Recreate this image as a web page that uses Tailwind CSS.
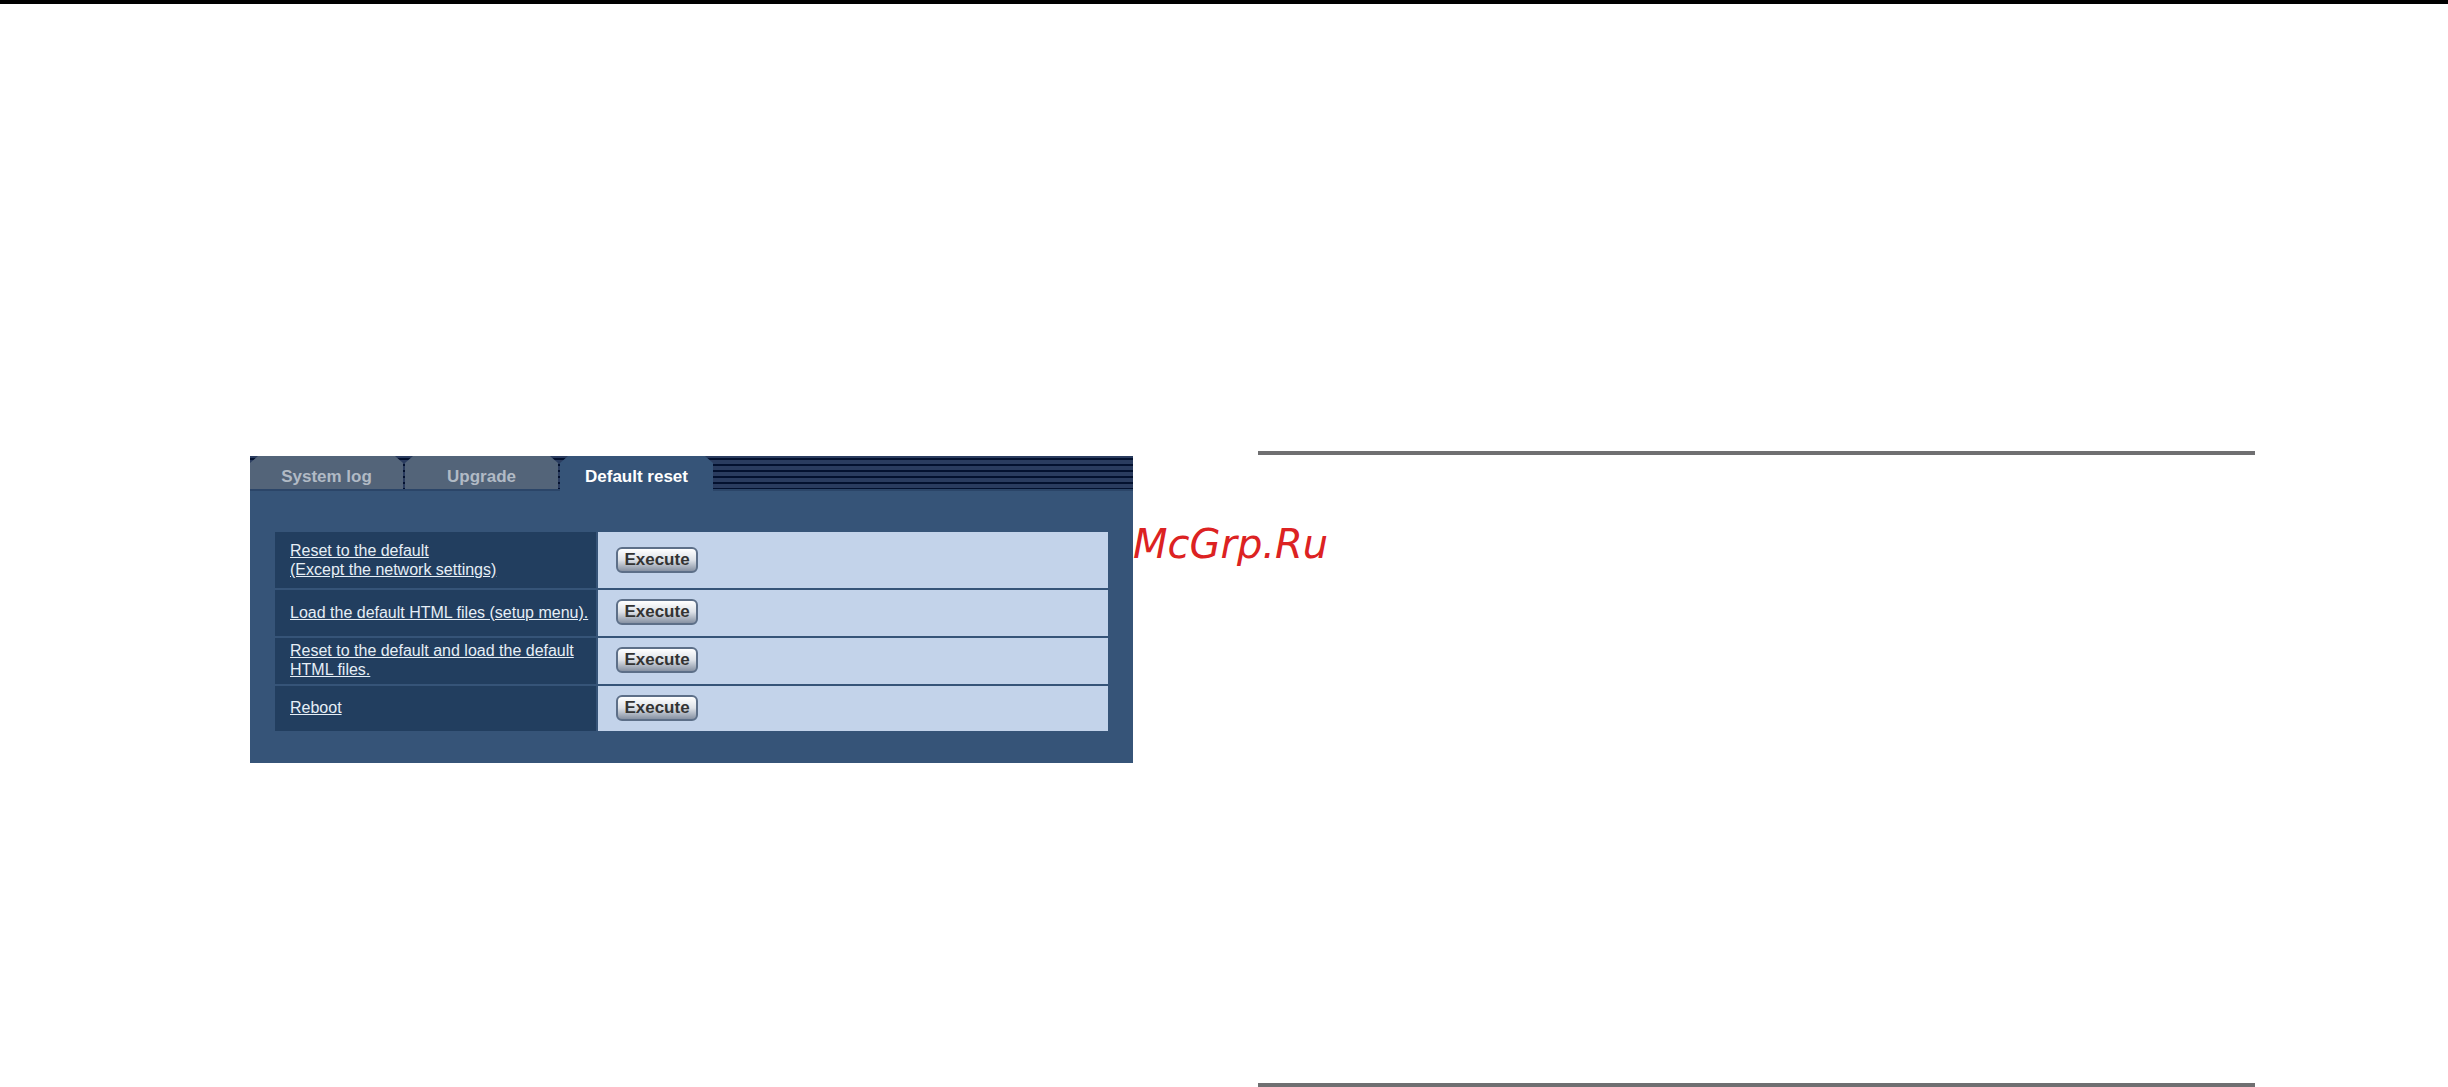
<!DOCTYPE html>
<html lang="en">
<head>
    <meta charset="UTF-8">
    <meta name="viewport" content="width=device-width, initial-scale=1.0">
    <title>Default reset</title>
    <script src="https://cdn.jsdelivr.net/npm/@tailwindcss/browser@4"></script>
</head>
<body class="bg-white font-['Liberation_Sans',Arial,sans-serif]">

    <main class="min-h-screen flex gap-[125px] border-t-4 border-black pt-[447px] pl-[250px] pr-[193px]">

        <!-- Maintenance panel -->
        <section class="relative flex-[883] self-start mt-[5px] bg-[#365478] pb-8">

            <!-- Tabs over the striped bar -->
            <nav class="flex gap-[2px] h-[35px] mb-[41px] font-bold text-[17px] leading-5 border-b-2 border-[#2b4568] bg-[repeating-linear-gradient(#2a3c5f_0_2px,#03112f_2px_4px,#2a3c5f_4px_6px)]">
                <a href="#" class="w-[153px] pt-[11px] text-center text-[#b1bac5] bg-[#536479] [clip-path:polygon(0_7px,8px_0,calc(100%-8px)_0,100%_7px,100%_100%,0_100%)]">System log</a>
                <a href="#" class="w-[153px] pt-[11px] text-center text-[#b1bac5] bg-[#536479] [clip-path:polygon(0_7px,8px_0,calc(100%-8px)_0,100%_7px,100%_100%,0_100%)]">Upgrade</a>
                <a href="#" class="w-[153px] h-[35px] pt-[11px] text-center text-white bg-[#365478] [clip-path:polygon(0_7px,8px_0,calc(100%-8px)_0,100%_7px,100%_100%,0_100%)]">Default reset</a>
            </nav>

            <!-- Reset actions -->
            <div class="px-[25px]">
                <table class="w-full text-[16px] leading-[19px] text-[#e6eef6]">
                    <tbody>
                        <tr class="h-[57px] border-b-2 border-[#365478]">
                            <th scope="row" class="w-[322px] pl-[15px] text-left font-normal bg-[#223e5f] border-r-2 border-[#365478]"><a href="#" class="underline">Reset to the default<br>(Except the network settings)</a></th>
                            <td class="pl-[18px] bg-[#c3d3ea]"><button class="block w-[82px] h-[26px] rounded-md border-2 border-[#5d6f88] bg-linear-to-b from-white via-[#dde1e7] to-[#8792a3] font-bold text-[17px] leading-5 text-[#333]">Execute</button></td>
                        </tr>
                        <tr class="h-[48px] border-b-2 border-[#365478]">
                            <th scope="row" class="pl-[15px] pb-[2px] text-left font-normal bg-[#223e5f] border-r-2 border-[#365478]"><a href="#" class="underline">Load the default HTML files (setup menu).</a></th>
                            <td class="pl-[18px] pb-[2px] bg-[#c3d3ea]"><button class="block w-[82px] h-[26px] rounded-md border-2 border-[#5d6f88] bg-linear-to-b from-white via-[#dde1e7] to-[#8792a3] font-bold text-[17px] leading-5 text-[#333]">Execute</button></td>
                        </tr>
                        <tr class="h-[48px] border-b-2 border-[#365478]">
                            <th scope="row" class="pl-[15px] pb-[2px] text-left font-normal bg-[#223e5f] border-r-2 border-[#365478]"><a href="#" class="underline">Reset to the default and load the default<br>HTML files.</a></th>
                            <td class="pl-[18px] pb-[2px] bg-[#c3d3ea]"><button class="block w-[82px] h-[26px] rounded-md border-2 border-[#5d6f88] bg-linear-to-b from-white via-[#dde1e7] to-[#8792a3] font-bold text-[17px] leading-5 text-[#333]">Execute</button></td>
                        </tr>
                        <tr class="h-[46px]">
                            <th scope="row" class="pl-[15px] pb-[2px] text-left font-normal bg-[#223e5f] border-r-2 border-[#365478]"><a href="#" class="underline">Reboot</a></th>
                            <td class="pl-[18px] pb-[2px] bg-[#c3d3ea]"><button class="block w-[82px] h-[26px] rounded-md border-2 border-[#5d6f88] bg-linear-to-b from-white via-[#dde1e7] to-[#8792a3] font-bold text-[17px] leading-5 text-[#333]">Execute</button></td>
                        </tr>
                    </tbody>
                </table>
            </div>

            <!-- Watermark -->
            <p class="absolute left-full top-16 font-['DejaVu_Sans',sans-serif] italic text-[40px] leading-[48px] text-[#dc2222]">McGrp.Ru</p>
        </section>

        <!-- Empty text column between two rules -->
        <section class="flex-[997] border-y-4 border-[#6f6f71]"></section>
    </main>

</body>
</html>
